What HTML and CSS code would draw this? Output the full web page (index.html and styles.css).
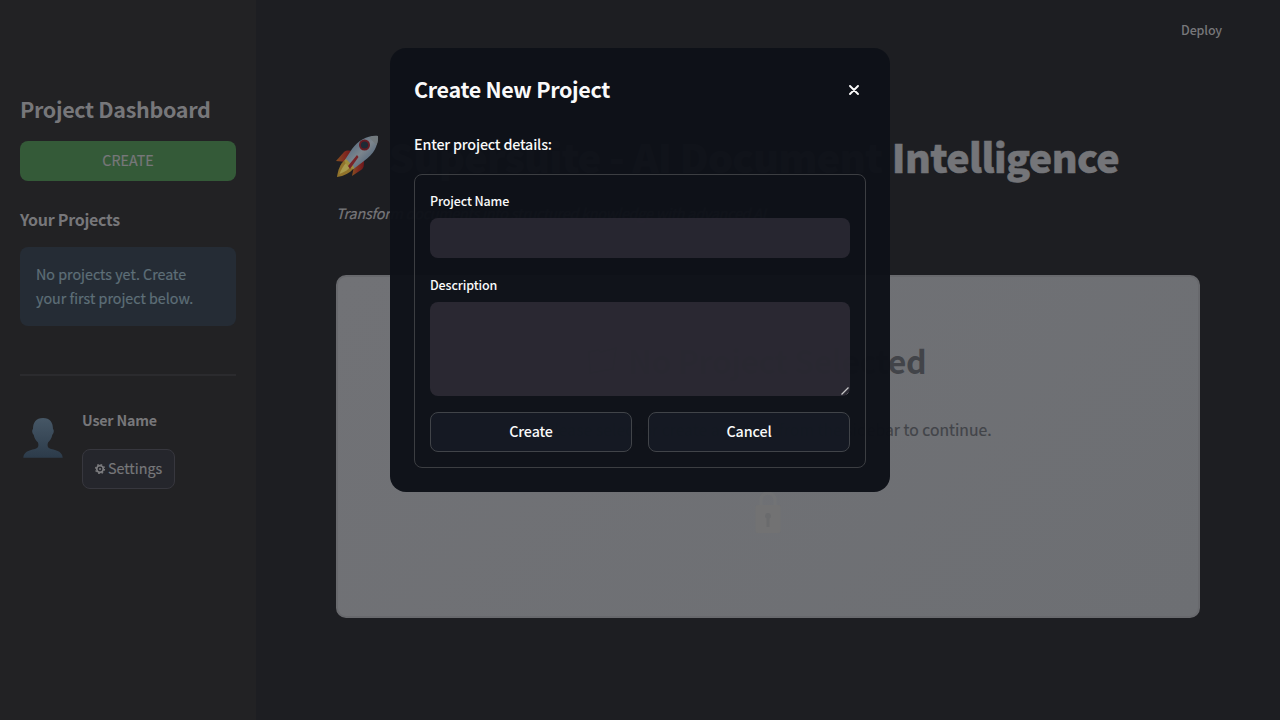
FILE: index.html
```html
<!DOCTYPE html>
<html lang="en">
<head>
<meta charset="utf-8">
<title>Project Dashboard</title>
<link rel="stylesheet" href="styles.css">
</head>
<body>
<div class="app">
  <aside class="sidebar">
    <h2 class="side-title"><span>Project Dashboard</span></h2>
    <button class="create-btn"><span>CREATE</span></button>
    <h3 class="side-sub"><span>Your Projects</span></h3>
    <div class="info"><span class="info-a">No projects yet. Create</span><br><span class="info-b">your first project below.</span></div>
    <div class="rule"></div>
    <div class="user">
      <svg class="avatar" viewBox="0 0 40 40"><defs><linearGradient id="av" x1="0" y1="0" x2="0" y2="1"><stop offset="0" stop-color="#465766"/><stop offset="1" stop-color="#2c3b4a"/></linearGradient></defs><path fill="url(#av)" d="M20 0C13 0 10 4.500 10 11C8.600 12 9.200 15.500 10.700 16.800C11.300 20.500 13 22.600 15 24.500C16 28 15.300 30 12 31C5 32.600.8 34 .3 39.800H39.700C39.200 34 35 32.600 28 31C24.700 30 24 28 25 24.500C27 22.600 28.700 20.500 29.300 16.800C30.800 15.500 31.400 12 30 11C30 4.500 27 0 20 0Z"/></svg>
      <div class="user-info">
        <div class="user-name"><span>User Name</span></div>
        <button class="settings"><svg class="gear" viewBox="0 0 12 12" fill="none" stroke="#7b7b7e"><circle cx="6" cy="6" r="3.300" stroke-width="1.700"/><circle cx="6" cy="6" r="1" fill="#7b7b7e" stroke="none"/><circle cx="6" cy="6" r="4.500" stroke-width="1.200" stroke-dasharray="1.700 1.834"/></svg><span>Settings</span></button>
      </div>
    </div>
  </aside>
  <main class="main">
    <header class="top"><span>Deploy</span></header>
    <h1 class="title">
      <svg class="rocket" viewBox="0 0 44 44"><defs><linearGradient id="hull" x1="0" y1="0" x2="1" y2="1"><stop offset="0" stop-color="#3c5b79"/><stop offset=".5" stop-color="#7c858d"/><stop offset="1" stop-color="#34506f"/></linearGradient><linearGradient id="fin" x1="0" y1="0" x2="1" y2="0"><stop offset="0" stop-color="#855020"/><stop offset=".5" stop-color="#812b20"/><stop offset="1" stop-color="#6d171b"/></linearGradient></defs>
      <path fill="url(#fin)" d="M1 26L9 17C11 15 15 15.500 18 16L12 27Z"/>
      <path fill="url(#fin)" d="M17 41L19 31L29 25C29 30 29 33 26 35Z"/>
      <path fill="#91732b" d="M10 25C5 29 3 35 2 42C9 41 15 38 19 33Z"/>
      <path fill="#a99b4d" d="M11 28C8 31 6 35 4.500 39C10 37 14 34 16 31Z"/>
      <path fill="url(#hull)" d="M43 1C33 0 24 5 17 14L9.500 25.500L18.500 34L29 26C39 19 43 11 43 1Z"/>
      <path fill="#72797d" d="M43 1C40 .7 37 1 34 2.500L41.500 10C43 7 43.200 4 43 1Z"/>
      <circle cx="29.500" cy="10" r="5.500" fill="#651b23"/><circle cx="29.500" cy="10" r="3.600" fill="#1e2a36"/>
      <path fill="#a08e3c" d="M9.500 25.500L11 24L19 32L18.500 34C15 34 11 30 9.500 25.500Z"/>
      <path fill="#782328" d="M13 31L22 20L23.500 22L15 34Z"/></svg>
      <span class="title-text">Supersuite - AI Document <span class="last">Intelligence</span></span>
    </h1>
    <p class="tagline"><span class="tag-a">Transform documents into structured knowledge with advanced AI</span></p>
    <section class="card">
      <h2 class="empty-title"><svg class="folder" viewBox="0 0 34 34" fill="none" stroke="#424449" stroke-width="2"><path d="M3 9L12 7L15 9L30 5L27 26L4 30Z"/></svg><span>No Project Selected</span></h2>
      <p class="empty-text"><span>Please select or create a project from the sidebar to continue.</span></p>
      <svg class="lock" viewBox="0 0 28 48"><path d="M7 22V14a7 7 0 0 1 14 0V22" fill="none" stroke="#727375" stroke-width="3.500"/><rect x="1.500" y="19" width="25" height="28" rx="2" fill="#727273"/><path d="M14 27a3 3 0 0 1 1.500 5.600V41h-3V32.600A3 3 0 0 1 14 27Z" fill="#6a6b6d"/></svg>
    </section>
  </main>
</div>
<div class="overlay">
  <div class="modal">
    <div class="modal-head"><h2 class="modal-title"><span>Create New Project</span></h2>
      <svg class="close" viewBox="0 0 10 10" stroke="#fafafa" stroke-width="1.900" stroke-linecap="round"><path d="M1 1L9 9M9 1L1 9"/></svg></div>
    <p class="prompt"><span>Enter project details:</span></p>
    <div class="form">
      <label class="label name-label"><span>Project Name</span></label>
      <div class="input"></div>
      <label class="label desc-label"><span>Description</span></label>
      <div class="textarea"><svg class="grip" viewBox="0 0 8 8" fill="none"><path d="M.5 7.500L7.500.5" stroke="#c6c6c8" stroke-width="1.200"/><path d="M5.500 7.500L7.500 5.500" stroke="#55555b"/></svg></div>
      <div class="actions"><button class="btn btn-create"><span>Create</span></button><button class="btn btn-cancel"><span>Cancel</span></button></div>
    </div>
  </div>
</div>
</body>
</html>
```
FILE: styles.css
```css
* { box-sizing: border-box; margin: 0; padding: 0; }
body { width: 1280px; height: 720px; overflow: hidden; background: #1d1e22; color: #77777a; font-family: "Noto Sans CJK SC", "Open Sans", sans-serif; font-size: 14.3px; }
button { font: inherit; color: inherit; border: 0; }
span { white-space: nowrap; }
.app { display: flex; height: 720px; }
.sidebar { width: 256px; background: #222224; padding: 94px 20px 0; flex: none; }
.side-title { font-size: 21.5px; line-height: 29px; height: 47px; font-weight: 700; letter-spacing: -.33px; }
.create-btn { display: block; width: 216px; height: 40px; border-radius: 8px; background: #345a38; line-height: 38px; padding-bottom: 2px; -webkit-text-stroke: .2px; }
.side-sub { font-size: 16px; line-height: 24px; margin-top: 26px; font-weight: 700; letter-spacing: -.28px; }
.info { margin-top: 16px; height: 79px; padding: 15px 16px; border-radius: 8px; background: #252c35; color: #5e6f78; line-height: 24px; -webkit-text-stroke: .2px; }
.rule { height: 2px; background: #2b2b2e; margin-top: 48px; }
.user { display: flex; margin-top: 32px; }
.avatar { width: 40px; height: 40px; margin: 10px 0 0 3px; }
.user-info { margin-left: 19px; }
.user-name { line-height: 24px; height: 41px; font-weight: 700; letter-spacing: -.2px; }
.settings { width: 93px; height: 40px; display: flex; align-items: center; padding: 0 0 3px 11px; gap: 2px; border: 1px solid #37373e; border-radius: 8px; background: #25262c; -webkit-text-stroke: .2px; }
.gear { width: 12px; height: 12px; margin-top: 2px; }
.main { width: 1024px; padding: 0 80px; }
.top { height: 60px; line-height: 60px; font-size: 12.5px; font-weight: 500; text-align: right; margin-right: -22px; letter-spacing: -.15px; }
.title { display: flex; align-items: center; height: 53px; margin-top: 69px; font-size: 39.4px; line-height: 53px; font-weight: 900; color: #747579; letter-spacing: -.5px; }
.last { letter-spacing: -.62px; margin-left: 1px; -webkit-text-stroke: .5px; }
.rocket { width: 44px; height: 44px; flex: none; margin: 3px 10px 0 -1px; }
.tagline { margin-top: 19px; line-height: 24px; font-style: italic; letter-spacing: -.2px; -webkit-text-stroke: .2px; }
.card { margin-top: 50px; width: 864px; height: 343px; border: 2px solid #68696d; border-radius: 10px; background: linear-gradient(135deg, #717276, #6d6f73); text-align: center; color: #424449; }
.empty-title { display: flex; justify-content: center; align-items: center; gap: 8px; margin: 61px 24px 0 0; height: 44px; font-size: 32px; line-height: 44px; letter-spacing: -.5px; }
.folder { width: 34px; height: 34px; }
.empty-text { margin-top: 34px; line-height: 28px; font-size: 15.7px; letter-spacing: .03px; -webkit-text-stroke: .2px; }
.lock { display: block; width: 28px; height: 48px; margin: 42px auto 0; }
.overlay { position: absolute; inset: 0; display: flex; justify-content: center; align-items: flex-start; padding-top: 48px; }
.modal { width: 500px; height: 444px; padding: 24px; border-radius: 16px; background: rgba(14, 17, 24, .98); color: #fafafa; }
.modal-head { display: flex; justify-content: space-between; align-items: center; height: 36px; padding-right: 7px; }
.modal-title { font-size: 21.5px; line-height: 34px; height: 36px; font-weight: 700; letter-spacing: -.32px; }
.close { width: 10px; height: 10px; }
.prompt { margin-top: 24px; line-height: 24px; font-weight: 500; letter-spacing: -.18px; }
.form { margin-top: 18px; height: 294px; padding: 16px 15px; border: 1px solid #3c3e42; border-radius: 8px; }
.label { display: block; font-size: 12.5px; line-height: 20px; height: 27px; font-weight: 500; letter-spacing: -.13px; }
.input { height: 40px; border-radius: 8px; background: rgba(46, 44, 55, .8); }
.desc-label { margin-top: 17px; }
.textarea { height: 94px; border-radius: 8px; background: rgba(67, 62, 73, .5); display: flex; align-items: flex-end; justify-content: flex-end; padding: 1px; }
.grip { width: 8px; height: 8px; }
.actions { display: flex; gap: 16px; margin-top: 16px; }
.btn { width: 202px; height: 40px; padding-bottom: 4px; border: 1px solid #414449; border-radius: 8px; background: rgba(25, 32, 43, .5); font-weight: 500; letter-spacing: -.1px; }
```
